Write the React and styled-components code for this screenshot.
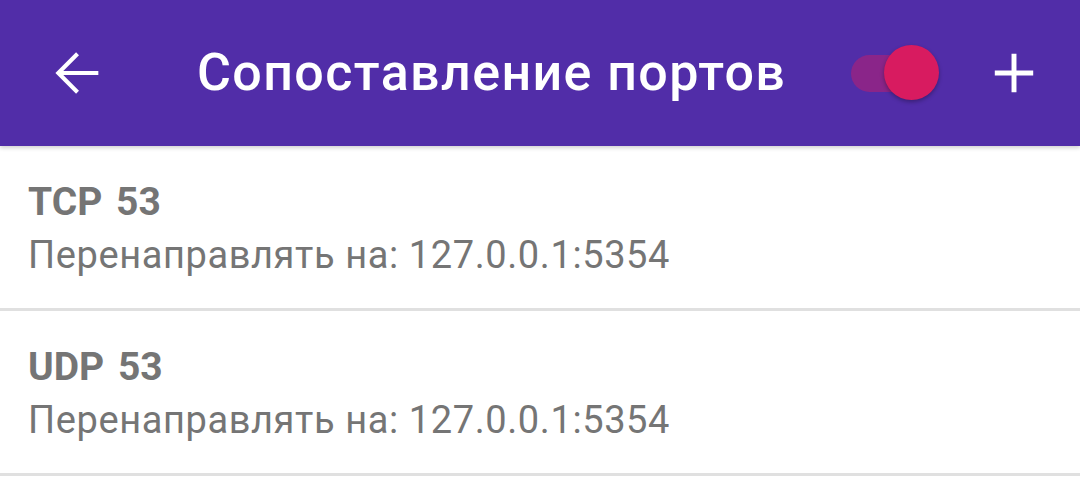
import React from "react";
import styled, { createGlobalStyle } from "styled-components";

const Global = createGlobalStyle`
  html, body { margin: 0; padding: 0; background: #ffffff; overflow: hidden; }
  body { font-family: Roboto, "Noto Sans", sans-serif; }
`;

const Screen = styled.div`
  width: 1080px;
  height: 503px;
  display: flex;
  flex-direction: column;
  background: #ffffff;
`;

const AppBar = styled.header`
  position: relative;
  z-index: 1;
  height: 146px;
  flex: 0 0 146px;
  background: #512da8;
  display: flex;
  align-items: center;
  box-shadow: 0 2px 4px rgba(0, 0, 0, 0.18);
`;

const IconButton = styled.button`
  width: 64px;
  height: 64px;
  margin-left: ${(p) => p.$ml || 0}px;
  margin-right: ${(p) => p.$mr || 0}px;
  padding: 0;
  border: 0;
  background: transparent;
  display: flex;
  align-items: center;
  justify-content: center;
  color: #ffffff;
  svg { width: 64px; height: 64px; display: block; }
`;

const Title = styled.h1`
  margin: 0 0 0 88px;
  flex: 1;
  font-family: Roboto, sans-serif;
  font-weight: 500;
  font-size: 52px;
  line-height: 60px;
  color: #ffffff;
  white-space: nowrap;
  letter-spacing: 1.4px;
`;

const Switch = styled.div`
  position: relative;
  width: 100px;
  height: 56px;
  margin-right: 36px;
  display: flex;
  align-items: center;
`;

const Track = styled.div`
  margin-left: 5px;
  width: 72px;
  height: 37px;
  border-radius: 19px;
  background: rgba(216, 27, 96, 0.42);
`;

const Thumb = styled.div`
  position: absolute;
  left: 38px;
  top: 0;
  width: 55px;
  height: 55px;
  border-radius: 50%;
  background: #d81b60;
  box-shadow: 0 2px 4px rgba(0, 0, 0, 0.3);
`;

const List = styled.ul`
  list-style: none;
  margin: 0;
  padding: 0;
`;

const Row = styled.li`
  height: 162px;
  box-sizing: content-box;
  border-bottom: 3px solid #e0e0e0;
  padding: 0 28px;
  display: flex;
  flex-direction: column;
`;

const RowTitle = styled.div`
  margin-top: 36px;
  font-family: Roboto, sans-serif;
  font-weight: 700;
  font-size: 39px;
  line-height: 40px;
  color: #757575;
  word-spacing: 4px;
`;

const RowSub = styled.div`
  margin-top: 10px;
  font-family: Roboto, sans-serif;
  font-weight: 400;
  font-size: 38px;
  line-height: 46px;
  letter-spacing: 0.6px;
  color: #757575;
  white-space: nowrap;
`;

const BackIcon = () => (
  <svg viewBox="0 0 24 24" fill="none" stroke="currentColor" strokeWidth="1.55" strokeLinecap="butt">
    <path d="M20 12H5.2" />
    <path d="M12.2 4.8L5 12l7.2 7.2" />
  </svg>
);

const AddIcon = () => (
  <svg viewBox="0 0 24 24" fill="none" stroke="currentColor" strokeWidth="1.85">
    <path d="M12 4.8v14.4M4.8 12h14.4" />
  </svg>
);

const rules = [
  { proto: "TCP", port: 53, target: "127.0.0.1:5354" },
  { proto: "UDP", port: 53, target: "127.0.0.1:5354" },
];

export default function App() {
  return (
    <Screen>
      <Global />
      <AppBar>
        <IconButton $ml={45} aria-label="back">
          <BackIcon />
        </IconButton>
        <Title>Сопоставление портов</Title>
        <Switch>
          <Track />
          <Thumb />
        </Switch>
        <IconButton $mr={34} aria-label="add">
          <AddIcon />
        </IconButton>
      </AppBar>
      <List>
        {rules.map((r, i) => (
          <Row key={i}>
            <RowTitle>
              {r.proto} {r.port}
            </RowTitle>
            <RowSub>Перенаправлять на: {r.target}</RowSub>
          </Row>
        ))}
      </List>
    </Screen>
  );
}
